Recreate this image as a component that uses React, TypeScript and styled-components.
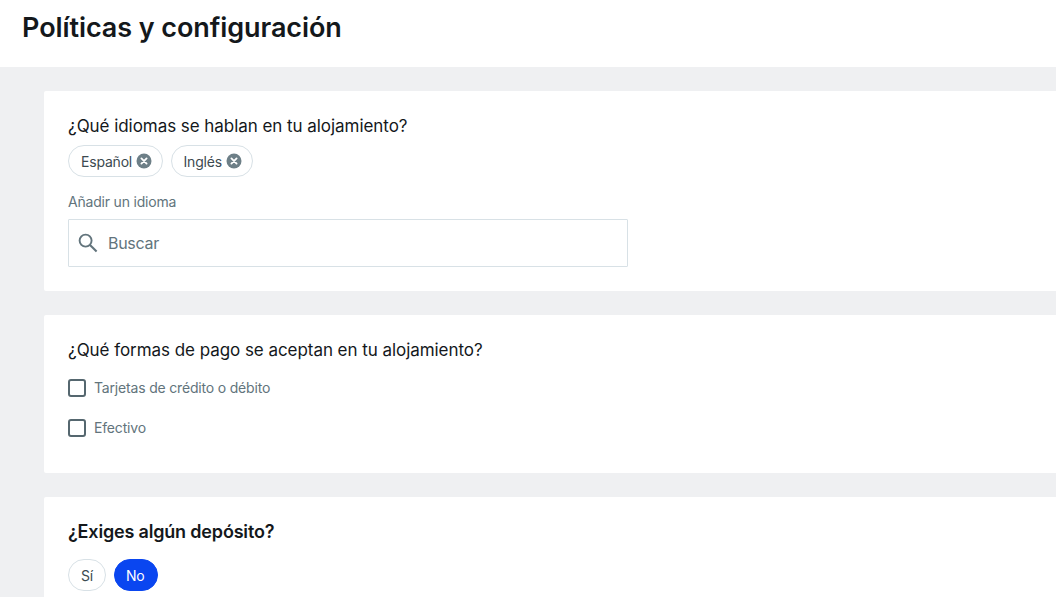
import * as React from "react";
import styled, { createGlobalStyle } from "styled-components";

const GlobalStyle = createGlobalStyle`
  html, body {
    margin: 0;
    padding: 0;
    height: 597px;
    overflow: hidden;
    background: #eff0f2;
    font-family: Inter, "Liberation Sans", sans-serif;
    color: #14181b;
  }
`;

function RemoveIcon() {
  return (
    <svg width="16" height="16" viewBox="0 0 16 16" aria-hidden="true">
      <circle cx="8" cy="8" r="7.5" fill="#6d7f87" />
      <path d="M5.4 5.4l5.2 5.2M10.6 5.4l-5.2 5.2" stroke="#fff" strokeWidth="1.8" strokeLinecap="round" />
    </svg>
  );
}

function SearchIcon() {
  return (
    <svg width="20" height="20" viewBox="0 0 20 20" fill="none" aria-hidden="true">
      <circle cx="7.6" cy="7.6" r="6" stroke="#62747c" strokeWidth="1.9" />
      <path d="M12 12l6.6 6.6" stroke="#62747c" strokeWidth="2.1" />
    </svg>
  );
}

export default function App() {
  return (
    <Page>
      <GlobalStyle />
      <Header>
        <Title>Políticas y configuración</Title>
      </Header>
      <Content>
        <Card>
          <Question>¿Qué idiomas se hablan en tu alojamiento?</Question>
          <Chips>
            <Chip>
              Español
              <RemoveIcon />
            </Chip>
            <Chip>
              Inglés
              <RemoveIcon />
            </Chip>
          </Chips>
          <FieldLabel>Añadir un idioma</FieldLabel>
          <SearchBox>
            <SearchIcon />
            <SearchText>Buscar</SearchText>
          </SearchBox>
        </Card>
        <Card>
          <Question>¿Qué formas de pago se aceptan en tu alojamiento?</Question>
          <Options>
            <Option>
              <CheckBox />
              <OptionText>Tarjetas de crédito o débito</OptionText>
            </Option>
            <Option>
              <CheckBox />
              <OptionText>Efectivo</OptionText>
            </Option>
          </Options>
        </Card>
        <Card>
          <Question $bold>¿Exiges algún depósito?</Question>
          <Chips $tall>
            <Toggle>Sí</Toggle>
            <Toggle $active>No</Toggle>
          </Chips>
        </Card>
      </Content>
    </Page>
  );
}

const Page = styled.div`
  width: 1056px;
  height: 597px;
  overflow: hidden;
`;

const Header = styled.header`
  height: 67px;
  background: #fff;
  padding: 0 22px;
  display: flex;
  align-items: flex-start;
  box-sizing: border-box;
`;

const Title = styled.h1`
  margin: 10px 0 0;
  font-size: 27px;
  line-height: 36px;
  font-weight: 600;
  letter-spacing: -0.08px;
`;

const Content = styled.main`
  padding: 24px 0 0 44px;
  display: flex;
  flex-direction: column;
  gap: 24px;
`;

const Card = styled.section`
  background: #fff;
  padding: 24px;
  border-radius: 2px 0 0 2px;
`;

const Question = styled.h2<{ $bold?: boolean }>`
  margin: 0;
  padding-bottom: 2px;
  font-size: ${(p) => (p.$bold ? "18px" : "17px")};
  line-height: 22px;
  letter-spacing: ${(p) => (p.$bold ? "-0.18px" : "-0.05px")};
  font-weight: ${(p) => (p.$bold ? 600 : 400)};
`;

const Chips = styled.div<{ $tall?: boolean }>`
  display: flex;
  gap: ${(p) => (p.$tall ? "8px" : "7.5px")};
  margin-top: ${(p) => (p.$tall ? "14px" : "6px")};
`;

const Chip = styled.div`
  height: 32px;
  box-sizing: border-box;
  display: flex;
  align-items: center;
  gap: 4px;
  padding: 0 10px 0 12px;
  border: 1px solid #d8e1e6;
  border-radius: 16px;
  font-size: 14px;
  letter-spacing: -0.2px;
  color: #3c4a50;
`;

const FieldLabel = styled.div`
  margin-top: 16px;
  font-size: 14px;
  line-height: 18px;
  letter-spacing: -0.2px;
  color: #62747c;
`;

const SearchBox = styled.div`
  margin-top: 8px;
  width: 560px;
  height: 48px;
  box-sizing: border-box;
  display: flex;
  align-items: center;
  gap: 10px;
  padding: 0 9px;
  border: 1px solid #d8e1e6;
  border-radius: 1px;
`;

const SearchText = styled.span`
  font-size: 16px;
  letter-spacing: -0.3px;
  color: #62747c;
`;

const Options = styled.div`
  margin-top: 16px;
  display: flex;
  flex-direction: column;
  gap: 22px;
  padding-bottom: 12px;
`;

const Option = styled.label`
  display: flex;
  align-items: center;
  gap: 8px;
  height: 18px;
`;

const OptionText = styled.span`
  padding-bottom: 2px;
  font-size: 14px;
  letter-spacing: -0.18px;
  color: #62747c;
`;

const CheckBox = styled.span`
  width: 18px;
  height: 18px;
  box-sizing: border-box;
  border: 2px solid #55676f;
  border-radius: 3px;
`;

const Toggle = styled.div<{ $active?: boolean }>`
  height: 32px;
  box-sizing: border-box;
  display: flex;
  align-items: center;
  padding: ${(p) => (p.$active ? "0 12px 0 11px" : "0 12px")};
  border-radius: 16px;
  font-size: 14px;
  letter-spacing: -0.2px;
  border: 1px solid ${(p) => (p.$active ? "#0a46f0" : "#d8e1e6")};
  background: ${(p) => (p.$active ? "#0a46f0" : "#fff")};
  color: ${(p) => (p.$active ? "#fff" : "#3c4a50")};
`;
